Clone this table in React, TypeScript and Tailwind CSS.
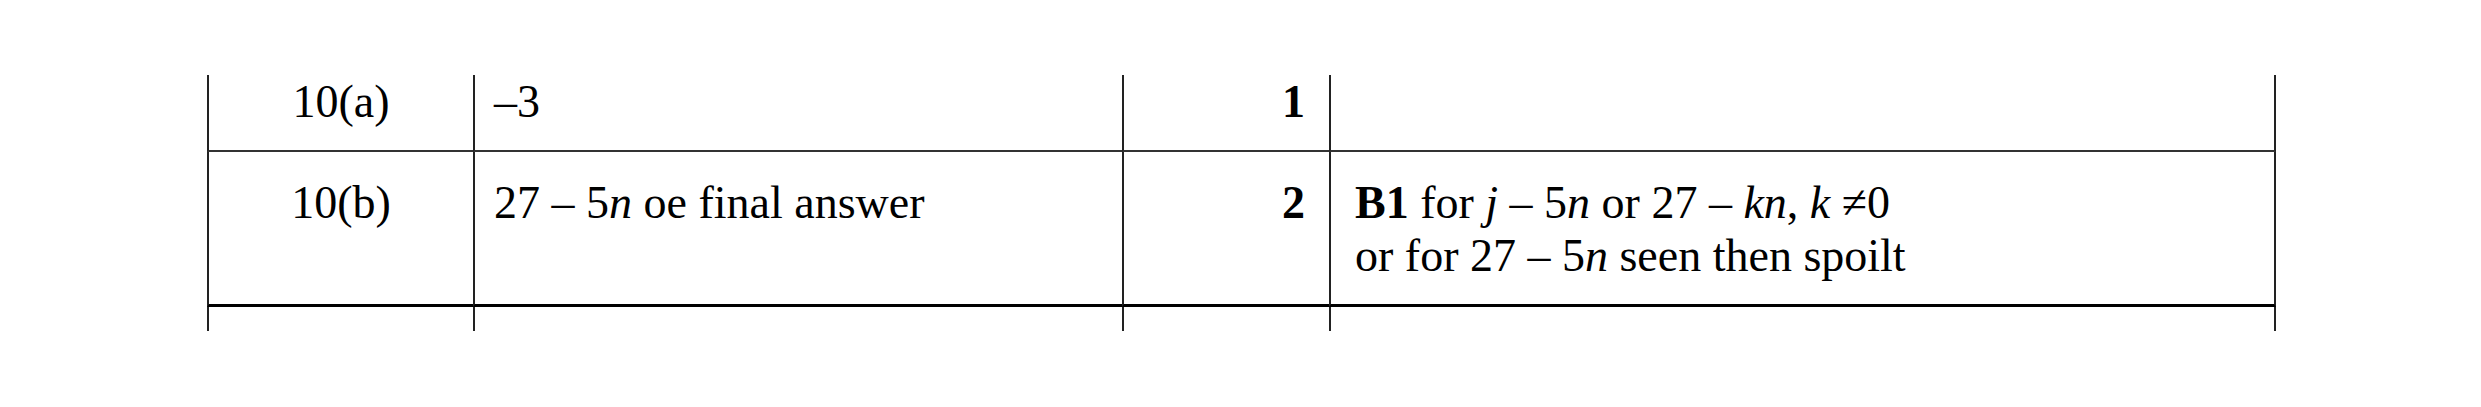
import React from "react";

const cell = "border-l-2 border-l-[#222]";

const App = () => {
  return (
    <div
      className="w-[2481px] h-[407px] bg-white pt-[75px] pl-[207px] text-black text-[46px] leading-[53px]"
      style={{ fontFamily: '"Liberation Serif", "Times New Roman", serif' }}
    >
      <div className="grid grid-cols-[266px_649px_207px_947px]">
        {/* row 10(a) */}
        <div className={`${cell} h-[77px] border-b-2 border-b-[#333] text-center`}>10(a)</div>
        <div className={`${cell} h-[77px] border-b-2 border-b-[#333] pl-[19px]`}>–3</div>
        <div className={`${cell} h-[77px] border-b-2 border-b-[#333] pr-[24px] text-right font-bold`}>1</div>
        <div className={`${cell} h-[77px] border-b-2 border-b-[#333] border-r-2 border-r-[#222]`}></div>

        {/* row 10(b) */}
        <div className={`${cell} h-[155px] border-b-[3px] border-b-black pt-[24px] text-center`}>10(b)</div>
        <div className={`${cell} h-[155px] border-b-[3px] border-b-black pt-[24px] pl-[19px]`}>
          27 – 5<i>n</i> oe final answer
        </div>
        <div className={`${cell} h-[155px] border-b-[3px] border-b-black pt-[24px] pr-[24px] text-right font-bold`}>2</div>
        <div className={`${cell} h-[155px] border-b-[3px] border-b-black border-r-2 border-r-[#222] pt-[24px] pl-[24px]`}>
          <div>
            <b>B1</b> for <i>j</i> – 5<i>n</i> or 27 – <i>kn</i>, <i>k</i> ≠0
          </div>
          <div>
            or for 27 – 5<i>n</i> seen then spoilt
          </div>
        </div>

        {/* next row, cut off */}
        <div className={`${cell} h-[24px]`}></div>
        <div className={`${cell} h-[24px]`}></div>
        <div className={`${cell} h-[24px]`}></div>
        <div className={`${cell} h-[24px] border-r-2 border-r-[#222]`}></div>
      </div>
    </div>
  );
};

export default App;
